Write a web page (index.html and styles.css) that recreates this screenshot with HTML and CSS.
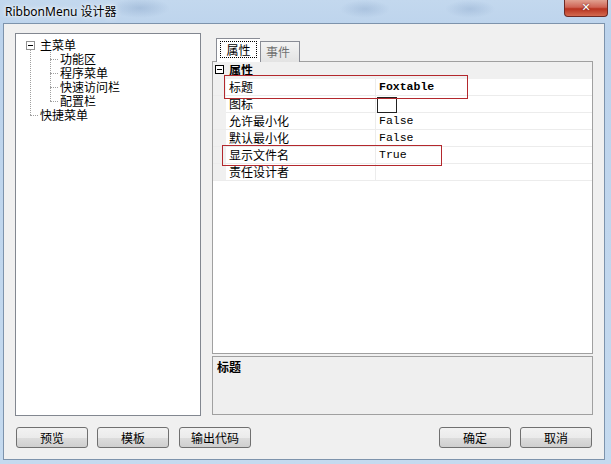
FILE: index.html
```html
<!DOCTYPE html>
<html lang="zh-CN">
<head>
    <meta charset="UTF-8">
    <title>RibbonMenu 设计器</title>
    <link rel="stylesheet" href="styles.css">
</head>
<body>
    <div class="window">
        <div class="titlebar">
            <span class="title">RibbonMenu 设计器</span>
            <span class="close">✕</span>
        </div>

        <div class="client">
            <div class="main">
                <!-- 菜单树 -->
                <div class="tree">
                    <ul class="tree-root">
                        <li class="open">
                            <span class="toggle"></span><span class="label">主菜单</span>
                            <ul class="tree-sub">
                                <li><span class="label">功能区</span></li>
                                <li><span class="label">程序菜单</span></li>
                                <li><span class="label">快速访问栏</span></li>
                                <li><span class="label">配置栏</span></li>
                            </ul>
                        </li>
                        <li class="leaf"><span class="label">快捷菜单</span></li>
                    </ul>
                </div>

                <!-- 属性面板 -->
                <div class="props">
                    <div class="tabs">
                        <span class="tab active"><span class="focus">属性</span></span>
                        <span class="tab">事件</span>
                    </div>

                    <div class="grid">
                        <div class="row cat">
                            <span class="margin"><span class="minus"></span></span>
                            <span class="name">属性</span>
                            <span class="value"></span>
                        </div>
                        <div class="row">
                            <span class="margin"></span>
                            <span class="name">标题</span>
                            <span class="value bold">Foxtable</span>
                        </div>
                        <div class="row">
                            <span class="margin"></span>
                            <span class="name">图标</span>
                            <span class="value"><span class="icon-box"></span></span>
                        </div>
                        <div class="row">
                            <span class="margin"></span>
                            <span class="name">允许最小化</span>
                            <span class="value">False</span>
                        </div>
                        <div class="row">
                            <span class="margin"></span>
                            <span class="name">默认最小化</span>
                            <span class="value">False</span>
                        </div>
                        <div class="row">
                            <span class="margin"></span>
                            <span class="name">显示文件名</span>
                            <span class="value">True</span>
                        </div>
                        <div class="row">
                            <span class="margin"></span>
                            <span class="name">责任设计者</span>
                            <span class="value"></span>
                        </div>

                        <div class="mark mark-title"></div>
                        <div class="mark mark-file"></div>
                    </div>

                    <div class="desc">标题</div>
                </div>
            </div>

            <div class="buttons">
                <div class="group">
                    <button>预览</button>
                    <button>模板</button>
                    <button class="wide-gap">输出代码</button>
                </div>
                <div class="group">
                    <button>确定</button>
                    <button>取消</button>
                </div>
            </div>
        </div>
    </div>
</body>
</html>
```

FILE: styles.css
```css
* {
    box-sizing: border-box;
}

body {
    margin: 0;
    width: 611px;
    height: 464px;
    overflow: hidden;
    font-family: "Noto Sans CJK SC", "Noto Sans", sans-serif;
    font-size: 12px;
    color: #000;
}

ul {
    list-style: none;
    margin: 0;
    padding: 0;
}

.window {
    width: 611px;
    height: 464px;
    padding: 0 6px 4px 3px;
    display: flex;
    flex-direction: column;
    background:
        radial-gradient(ellipse 30px 10px at 140px 8px, rgba(120, 150, 190, 0.35), transparent),
        radial-gradient(ellipse 25px 9px at 365px 9px, rgba(120, 150, 190, 0.3), transparent),
        radial-gradient(ellipse 25px 9px at 470px 9px, rgba(120, 150, 190, 0.3), transparent),
        linear-gradient(to bottom, #c3d8ee 0%, #bcd3ec 30px, #c5daef 100%);
}

.titlebar {
    height: 23px;
    display: flex;
    justify-content: space-between;
    align-items: flex-start;
}

.title {
    margin: 4px 0 0 2px;
    font-family: "Noto Sans", "Noto Sans CJK SC", sans-serif;
    font-size: 12px;
    line-height: 15px;
    text-shadow: 0 0 6px #fff, 0 0 3px #fff;
}

.close {
    width: 44px;
    height: 17px;
    margin-right: -3px;
    border: 1px solid #6d2a25;
    border-top: none;
    border-radius: 0 0 4px 4px;
    background: linear-gradient(to bottom, #e1a090 0%, #cf6455 45%, #b83320 55%, #d36a4f 100%);
    color: #fff;
    font-family: "DejaVu Sans", sans-serif;
    font-size: 11px;
    font-weight: bold;
    line-height: 16px;
    text-align: center;
    text-shadow: 0 0 2px #5a1a10;
}

.client {
    flex: 1;
    background: #f0f0f0;
    border: 1px solid #7d93ac;
    padding: 9px 11px 0 11px;
}

.main {
    display: flex;
    gap: 11px;
    height: 383px;
}

/* 菜单树 */
.tree {
    width: 186px;
    height: 100%;
    background: #fff;
    border: 1px solid #828790;
    padding-top: 4px;
}

.tree-root {
    position: relative;
}

.tree-root::before {
    content: "";
    position: absolute;
    left: 14px;
    top: 12px;
    bottom: 7px;
    border-left: 1px dotted #a0a0a0;
}

.tree li {
    position: relative;
    line-height: 14px;
    padding-left: 24px;
    white-space: nowrap;
}

.tree-sub {
    position: relative;
    margin-left: -24px;
}

.tree-sub::before {
    content: "";
    position: absolute;
    left: 34px;
    top: 0;
    bottom: 7px;
    border-left: 1px dotted #a0a0a0;
}

.tree-sub li {
    padding-left: 44px;
}

.tree-sub li::before,
.tree li.leaf::before {
    content: "";
    position: absolute;
    top: 7px;
    width: 8px;
    border-top: 1px dotted #a0a0a0;
}

.tree-sub li::before {
    left: 34px;
}

.tree li.leaf::before {
    left: 14px;
}

.toggle {
    position: absolute;
    left: 10px;
    top: 3px;
    width: 9px;
    height: 9px;
    border: 1px solid #919191;
    background: #fff;
}

.toggle::after {
    content: "";
    position: absolute;
    left: 1px;
    top: 3px;
    width: 5px;
    border-top: 1px solid #000;
}

/* 属性面板 */
.props {
    flex: 1;
    display: flex;
    flex-direction: column;
}

.tabs {
    display: flex;
    align-items: flex-end;
    height: 29px;
    padding: 5px 0 0 4px;
    margin-bottom: -1px;
    position: relative;
    z-index: 1;
}

.tab {
    height: 21px;
    width: 40px;
    padding: 0 5px;
    border: 1px solid #898c95;
    border-bottom: none;
    background: linear-gradient(to bottom, #f3f3f3, #e3e3e3);
    color: #707070;
    line-height: 19px;
}

.tab.active {
    height: 24px;
    width: 44px;
    padding: 2px 3px 0;
    background: #fff;
    color: #000;
    border-right: none;
}

.tab.active + .tab {
    border-left: 1px solid #898c95;
}

.focus {
    display: block;
    border: 1px dotted #000;
    line-height: 15px;
    text-align: center;
}

.grid {
    position: relative;
    height: 293px;
    background: #fff;
    border: 1px solid #a0a0a0;
}

.row {
    display: grid;
    grid-template-columns: 13px 150px 1fr;
    height: 17px;
    border-bottom: 1px solid #ececec;
    line-height: 16px;
}

.row .margin {
    background: #f0f0f0;
    position: relative;
}

.row .name {
    padding-left: 3px;
    border-right: 1px solid #ececec;
    white-space: nowrap;
}

.row .value {
    padding-left: 3px;
    font-family: "Liberation Mono", monospace;
    font-size: 11.5px;
}

.row .value.bold {
    font-weight: bold;
}

.row.cat {
    background: #f0f0f0;
    border-bottom-color: #f0f0f0;
}

.row.cat .name {
    font-weight: bold;
    border-right: none;
}

.minus {
    position: absolute;
    left: 2px;
    top: 3px;
    width: 9px;
    height: 9px;
    border: 1px solid #000;
    background: #fff;
}

.minus::after {
    content: "";
    position: absolute;
    left: 1px;
    top: 3px;
    width: 5px;
    border-top: 1px solid #000;
}

.icon-box {
    display: block;
    width: 20px;
    height: 16px;
    margin: 1px 0 0 -2px;
    border: 1px solid #222;
    background: #fff;
}

.mark {
    position: absolute;
    border: 1px solid #b3282d;
}

.mark-title {
    left: 11px;
    top: 13px;
    width: 244px;
    height: 24px;
}

.mark-file {
    left: 9px;
    top: 83px;
    width: 220px;
    height: 21px;
}

.desc {
    margin-top: 2px;
    height: 59px;
    background: #efefef;
    border: 1px solid #a0a0a0;
    padding: 2px 4px;
    font-weight: bold;
    line-height: 16px;
}

/* 底部按钮 */
.buttons {
    display: flex;
    justify-content: space-between;
    margin-top: 11px;
    padding: 0 1px;
}

.group {
    display: flex;
    gap: 9px;
}

.group .wide-gap {
    margin-left: 1px;
}

button {
    width: 72px;
    height: 21px;
    padding: 0;
    border: 1px solid #707070;
    border-radius: 3px;
    background: linear-gradient(to bottom, #f2f2f2 0%, #ebebeb 50%, #dddddd 51%, #cfcfcf 100%);
    font-family: "Noto Sans CJK SC", sans-serif;
    font-size: 12px;
    line-height: 18px;
    color: #000;
}
```
